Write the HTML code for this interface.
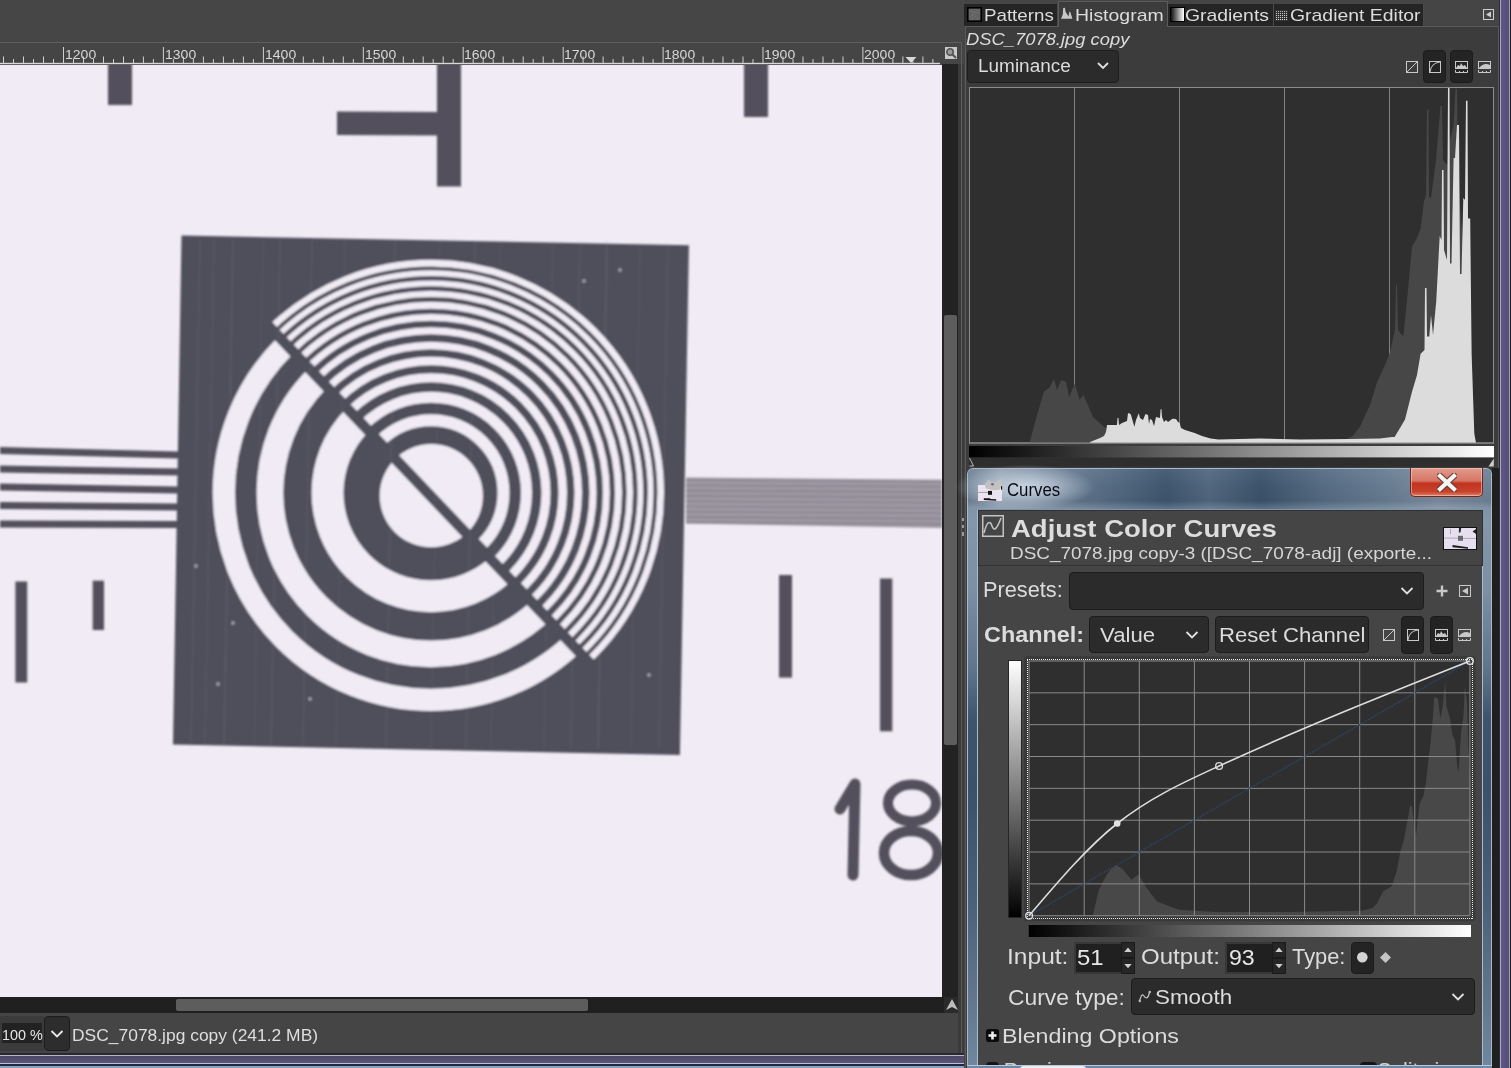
<!DOCTYPE html><html><head><meta charset="utf-8"><style>
*{box-sizing:border-box}
html,body{margin:0;padding:0}
body{width:1511px;height:1068px;overflow:hidden;position:relative;background:#454545;font-family:"Liberation Sans", sans-serif}
.abs{position:absolute;display:block}
.t{position:absolute;white-space:pre;line-height:1;transform-origin:0 0}
</style></head><body>
<div class="abs" style="left:0;top:0;width:964px;height:43px;background:#464646"></div>
<div class="abs" style="left:0;top:42px;width:962px;height:1px;background:#5e5e5e"></div>
<div class="abs" style="left:961px;top:42px;width:1px;height:1026px;background:#5e5e5e"></div>
<svg class="abs" style="left:0;top:43px" width="942" height="22" viewBox="0 43 942 22"><rect x="0" y="43" width="942" height="22" fill="#454545"/><g stroke="#d0d0d0" stroke-width="1"><line x1="-36.4" y1="47" x2="-36.4" y2="63"/><line x1="-26.4" y1="59" x2="-26.4" y2="63"/><line x1="-16.4" y1="56.5" x2="-16.4" y2="63"/><line x1="-6.5" y1="59" x2="-6.5" y2="63"/><line x1="3.5" y1="56.5" x2="3.5" y2="63"/><line x1="13.5" y1="59" x2="13.5" y2="63"/><line x1="23.5" y1="56.5" x2="23.5" y2="63"/><line x1="33.5" y1="59" x2="33.5" y2="63"/><line x1="43.5" y1="56.5" x2="43.5" y2="63"/><line x1="53.5" y1="59" x2="53.5" y2="63"/><line x1="63.5" y1="47" x2="63.5" y2="63"/><line x1="73.5" y1="59" x2="73.5" y2="63"/><line x1="83.5" y1="56.5" x2="83.5" y2="63"/><line x1="93.5" y1="59" x2="93.5" y2="63"/><line x1="103.5" y1="56.5" x2="103.5" y2="63"/><line x1="113.5" y1="59" x2="113.5" y2="63"/><line x1="123.5" y1="56.5" x2="123.5" y2="63"/><line x1="133.5" y1="59" x2="133.5" y2="63"/><line x1="143.4" y1="56.5" x2="143.4" y2="63"/><line x1="153.4" y1="59" x2="153.4" y2="63"/><line x1="163.4" y1="47" x2="163.4" y2="63"/><line x1="173.4" y1="59" x2="173.4" y2="63"/><line x1="183.4" y1="56.5" x2="183.4" y2="63"/><line x1="193.4" y1="59" x2="193.4" y2="63"/><line x1="203.4" y1="56.5" x2="203.4" y2="63"/><line x1="213.4" y1="59" x2="213.4" y2="63"/><line x1="223.4" y1="56.5" x2="223.4" y2="63"/><line x1="233.4" y1="59" x2="233.4" y2="63"/><line x1="243.4" y1="56.5" x2="243.4" y2="63"/><line x1="253.4" y1="59" x2="253.4" y2="63"/><line x1="263.4" y1="47" x2="263.4" y2="63"/><line x1="273.4" y1="59" x2="273.4" y2="63"/><line x1="283.3" y1="56.5" x2="283.3" y2="63"/><line x1="293.3" y1="59" x2="293.3" y2="63"/><line x1="303.3" y1="56.5" x2="303.3" y2="63"/><line x1="313.3" y1="59" x2="313.3" y2="63"/><line x1="323.3" y1="56.5" x2="323.3" y2="63"/><line x1="333.3" y1="59" x2="333.3" y2="63"/><line x1="343.3" y1="56.5" x2="343.3" y2="63"/><line x1="353.3" y1="59" x2="353.3" y2="63"/><line x1="363.3" y1="47" x2="363.3" y2="63"/><line x1="373.3" y1="59" x2="373.3" y2="63"/><line x1="383.3" y1="56.5" x2="383.3" y2="63"/><line x1="393.3" y1="59" x2="393.3" y2="63"/><line x1="403.3" y1="56.5" x2="403.3" y2="63"/><line x1="413.3" y1="59" x2="413.3" y2="63"/><line x1="423.2" y1="56.5" x2="423.2" y2="63"/><line x1="433.2" y1="59" x2="433.2" y2="63"/><line x1="443.2" y1="56.5" x2="443.2" y2="63"/><line x1="453.2" y1="59" x2="453.2" y2="63"/><line x1="463.2" y1="47" x2="463.2" y2="63"/><line x1="473.2" y1="59" x2="473.2" y2="63"/><line x1="483.2" y1="56.5" x2="483.2" y2="63"/><line x1="493.2" y1="59" x2="493.2" y2="63"/><line x1="503.2" y1="56.5" x2="503.2" y2="63"/><line x1="513.2" y1="59" x2="513.2" y2="63"/><line x1="523.2" y1="56.5" x2="523.2" y2="63"/><line x1="533.2" y1="59" x2="533.2" y2="63"/><line x1="543.2" y1="56.5" x2="543.2" y2="63"/><line x1="553.2" y1="59" x2="553.2" y2="63"/><line x1="563.2" y1="47" x2="563.2" y2="63"/><line x1="573.1" y1="59" x2="573.1" y2="63"/><line x1="583.1" y1="56.5" x2="583.1" y2="63"/><line x1="593.1" y1="59" x2="593.1" y2="63"/><line x1="603.1" y1="56.5" x2="603.1" y2="63"/><line x1="613.1" y1="59" x2="613.1" y2="63"/><line x1="623.1" y1="56.5" x2="623.1" y2="63"/><line x1="633.1" y1="59" x2="633.1" y2="63"/><line x1="643.1" y1="56.5" x2="643.1" y2="63"/><line x1="653.1" y1="59" x2="653.1" y2="63"/><line x1="663.1" y1="47" x2="663.1" y2="63"/><line x1="673.1" y1="59" x2="673.1" y2="63"/><line x1="683.1" y1="56.5" x2="683.1" y2="63"/><line x1="693.1" y1="59" x2="693.1" y2="63"/><line x1="703.1" y1="56.5" x2="703.1" y2="63"/><line x1="713.0" y1="59" x2="713.0" y2="63"/><line x1="723.0" y1="56.5" x2="723.0" y2="63"/><line x1="733.0" y1="59" x2="733.0" y2="63"/><line x1="743.0" y1="56.5" x2="743.0" y2="63"/><line x1="753.0" y1="59" x2="753.0" y2="63"/><line x1="763.0" y1="47" x2="763.0" y2="63"/><line x1="773.0" y1="59" x2="773.0" y2="63"/><line x1="783.0" y1="56.5" x2="783.0" y2="63"/><line x1="793.0" y1="59" x2="793.0" y2="63"/><line x1="803.0" y1="56.5" x2="803.0" y2="63"/><line x1="813.0" y1="59" x2="813.0" y2="63"/><line x1="823.0" y1="56.5" x2="823.0" y2="63"/><line x1="833.0" y1="59" x2="833.0" y2="63"/><line x1="843.0" y1="56.5" x2="843.0" y2="63"/><line x1="852.9" y1="59" x2="852.9" y2="63"/><line x1="862.9" y1="47" x2="862.9" y2="63"/><line x1="872.9" y1="59" x2="872.9" y2="63"/><line x1="882.9" y1="56.5" x2="882.9" y2="63"/><line x1="892.9" y1="59" x2="892.9" y2="63"/><line x1="902.9" y1="56.5" x2="902.9" y2="63"/><line x1="912.9" y1="59" x2="912.9" y2="63"/><line x1="922.9" y1="56.5" x2="922.9" y2="63"/><line x1="932.9" y1="59" x2="932.9" y2="63"/></g><rect x="0" y="62.8" width="940" height="1.4" fill="#d8d8d8"/><polygon points="905.5,57 916.5,57 911,63" fill="#d8d8d8"/></svg>
<span class="t" style="left:64.7px;top:47.7px;font-size:13px;color:#d8d8d8;transform:scaleX(1.0786);">1200</span>
<span class="t" style="left:164.7px;top:47.7px;font-size:13px;color:#d8d8d8;transform:scaleX(1.0786);">1300</span>
<span class="t" style="left:264.6px;top:47.7px;font-size:13px;color:#d8d8d8;transform:scaleX(1.0786);">1400</span>
<span class="t" style="left:364.5px;top:47.7px;font-size:13px;color:#d8d8d8;transform:scaleX(1.0786);">1500</span>
<span class="t" style="left:464.4px;top:47.7px;font-size:13px;color:#d8d8d8;transform:scaleX(1.0786);">1600</span>
<span class="t" style="left:564.4px;top:47.7px;font-size:13px;color:#d8d8d8;transform:scaleX(1.0786);">1700</span>
<span class="t" style="left:664.3px;top:47.7px;font-size:13px;color:#d8d8d8;transform:scaleX(1.0786);">1800</span>
<span class="t" style="left:764.2px;top:47.7px;font-size:13px;color:#d8d8d8;transform:scaleX(1.0786);">1900</span>
<span class="t" style="left:864.2px;top:47.7px;font-size:13px;color:#d8d8d8;transform:scaleX(1.0786);">2000</span>
<svg class="abs" style="left:0;top:65px" width="942" height="932" viewBox="0 65 942 932"><defs><clipPath id="cur"><polygon points="-254.8,-231.4 1124.5,1216.9 1848.6,527.3 469.4,-921.0"/></clipPath><clipPath id="cll"><polygon points="-262.5,-224.1 1116.8,1224.2 392.6,1913.8 -986.6,465.5"/></clipPath></defs><rect x="0" y="65" width="942" height="932" fill="#f0ebf4"/><filter id="soft" x="-5%" y="-5%" width="110%" height="110%"><feGaussianBlur stdDeviation="1.0"/></filter><g filter="url(#soft)"><g fill="#534f5c"><rect x="108" y="60" width="24" height="45"/><polygon points="337,111.5 440,112 440,135.5 337,135"/><rect x="437" y="60" width="24" height="126.5"/><rect x="744" y="60" width="24" height="57"/><polygon points="0,446.9 178,451.4 178,458.6 0,454.1"/><polygon points="0,465.4 178,468.4 178,475.6 0,472.6"/><polygon points="0,483.4 178,486.4 178,493.6 0,490.6"/><polygon points="0,501.9 178,503.4 178,510.6 0,509.1"/><polygon points="0,520.4 178,520.9 178,528.1 0,527.6"/><rect x="15.4" y="581.5" width="11.8" height="101"/><rect x="92.7" y="580.7" width="11.3" height="49.3"/><rect x="779" y="575" width="13" height="102.6"/><rect x="880" y="578.5" width="12.3" height="152.8"/><polygon points="181.5,235.5 688.9,245.2 679.9,755.1 173,744.6" fill="#504f5b"/><line x1="200" y1="240" x2="191" y2="748" stroke="#9a9cac" stroke-width="1.2" opacity="0.12"/><line x1="214" y1="240" x2="205" y2="748" stroke="#9a9cac" stroke-width="1.2" opacity="0.10"/><line x1="233" y1="240" x2="224" y2="748" stroke="#9a9cac" stroke-width="1.2" opacity="0.16"/><line x1="263" y1="240" x2="254" y2="748" stroke="#9a9cac" stroke-width="1.2" opacity="0.09"/><line x1="280" y1="240" x2="271" y2="748" stroke="#9a9cac" stroke-width="1.2" opacity="0.14"/><line x1="312" y1="240" x2="303" y2="748" stroke="#9a9cac" stroke-width="1.2" opacity="0.12"/><line x1="345" y1="240" x2="336" y2="748" stroke="#9a9cac" stroke-width="1.2" opacity="0.09"/><line x1="395" y1="240" x2="386" y2="748" stroke="#9a9cac" stroke-width="1.2" opacity="0.14"/><line x1="440" y1="240" x2="431" y2="748" stroke="#9a9cac" stroke-width="1.2" opacity="0.08"/><line x1="475" y1="240" x2="466" y2="748" stroke="#9a9cac" stroke-width="1.2" opacity="0.13"/><line x1="500" y1="240" x2="491" y2="748" stroke="#9a9cac" stroke-width="1.2" opacity="0.09"/><line x1="553" y1="240" x2="544" y2="748" stroke="#9a9cac" stroke-width="1.2" opacity="0.09"/><line x1="580" y1="240" x2="571" y2="748" stroke="#9a9cac" stroke-width="1.2" opacity="0.13"/><line x1="607" y1="240" x2="598" y2="748" stroke="#9a9cac" stroke-width="1.2" opacity="0.18"/><line x1="640" y1="240" x2="631" y2="748" stroke="#9a9cac" stroke-width="1.2" opacity="0.09"/><line x1="668" y1="240" x2="659" y2="748" stroke="#9a9cac" stroke-width="1.2" opacity="0.11"/><circle cx="584" cy="281" r="1.7" fill="#e6e4ee" opacity="0.6"/><circle cx="620" cy="270" r="1.7" fill="#e6e4ee" opacity="0.6"/><circle cx="218" cy="684" r="1.7" fill="#e6e4ee" opacity="0.6"/><circle cx="649" cy="675" r="1.7" fill="#e6e4ee" opacity="0.6"/><circle cx="196" cy="566" r="1.7" fill="#e6e4ee" opacity="0.6"/><circle cx="233" cy="623" r="1.7" fill="#e6e4ee" opacity="0.6"/><circle cx="310" cy="699" r="1.7" fill="#e6e4ee" opacity="0.6"/></g><polygon points="686,477.5 942,479.7 942,528 686,523.5" fill="#9d98a3"/><line x1="686" y1="480.0" x2="942" y2="481.5" stroke="#8a8590" stroke-width="1.6"/><line x1="686" y1="485.3" x2="942" y2="486.8" stroke="#8a8590" stroke-width="1.6"/><line x1="686" y1="490.6" x2="942" y2="492.1" stroke="#8a8590" stroke-width="1.6"/><line x1="686" y1="495.9" x2="942" y2="497.4" stroke="#8a8590" stroke-width="1.6"/><line x1="686" y1="501.2" x2="942" y2="502.7" stroke="#8a8590" stroke-width="1.6"/><line x1="686" y1="506.5" x2="942" y2="508.0" stroke="#8a8590" stroke-width="1.6"/><line x1="686" y1="511.8" x2="942" y2="513.3" stroke="#8a8590" stroke-width="1.6"/><line x1="686" y1="517.1" x2="942" y2="518.6" stroke="#8a8590" stroke-width="1.6"/><line x1="686" y1="522.4" x2="942" y2="523.9" stroke="#8a8590" stroke-width="1.6"/><g fill="none" stroke="#f0ebf4" clip-path="url(#cur)"><circle cx="431.3" cy="495.7" r="51.6" fill="#f0ebf4" stroke="none"/><circle cx="431" cy="492.8" r="72.5" stroke-width="12.0"/><circle cx="431" cy="492.8" r="95.5" stroke-width="11"/><circle cx="431" cy="492.8" r="115.0" stroke-width="9.0"/><circle cx="431" cy="492.8" r="131.75" stroke-width="8.5"/><circle cx="431" cy="492.8" r="147.25" stroke-width="7.5"/><circle cx="431" cy="492.8" r="162.0" stroke-width="7.0"/><circle cx="431" cy="492.8" r="175.4" stroke-width="6.800000000000011"/><circle cx="431" cy="492.8" r="187.5" stroke-width="7"/><circle cx="431" cy="492.8" r="198.85" stroke-width="6.300000000000011"/><circle cx="431" cy="492.8" r="209.39999999999998" stroke-width="5.599999999999994"/><circle cx="431" cy="492.8" r="219.65" stroke-width="5.699999999999989"/><circle cx="431" cy="492.8" r="229.7" stroke-width="6.599999999999994"/></g><g fill="none" stroke="#f0ebf4" clip-path="url(#cll)"><circle cx="431.3" cy="495.7" r="51.6" fill="#f0ebf4" stroke="none"/><circle cx="431" cy="492.8" r="103.45" stroke-width="31.900000000000006"/><circle cx="431" cy="492.8" r="161.05" stroke-width="26.700000000000017"/><circle cx="431" cy="492.8" r="207.15" stroke-width="22.30000000000001"/></g><g fill="none" stroke="#534f5c" stroke-width="11" stroke-linecap="round" stroke-linejoin="round"><path d="M840,809 L855,784 L853,875"/><ellipse cx="912" cy="803" rx="24" ry="18.5" stroke-width="10"/><ellipse cx="911" cy="853" rx="27" ry="22" stroke-width="10.5"/></g></g></svg>
<div class="abs" style="left:945px;top:47px;width:12px;height:12px;background:#c9c9c9"></div>
<svg class="abs" style="left:945px;top:47px" width="12" height="12"><circle cx="5" cy="5" r="3.2" fill="#9a9a9a" stroke="#555" stroke-width="1.6"/><line x1="7.3" y1="7.3" x2="11" y2="11" stroke="#555" stroke-width="2"/></svg>
<div class="abs" style="left:942px;top:64px;width:16px;height:933px;background:#222"></div>
<div class="abs" style="left:944px;top:315px;width:13px;height:430px;background:#5d5d5d;border-radius:2px"></div>
<div class="abs" style="left:0;top:997px;width:944px;height:16px;background:#202020"></div>
<div class="abs" style="left:176px;top:999px;width:412px;height:12px;background:#5d5d5d;border-radius:2px"></div>
<div class="abs" style="left:944px;top:997px;width:14px;height:16px;background:#2a2a2a"></div>
<svg class="abs" style="left:944px;top:997px" width="16" height="16"><polygon points="8,2 14,13 8,10 2,13" fill="#bdbdbd"/></svg>
<div class="abs" style="left:0;top:1013px;width:961px;height:41px;background:#454545"></div>
<div class="abs" style="left:0;top:1016px;width:44px;height:35px;background:#3b3b3b"></div>
<div class="abs" style="left:2px;top:1023px;width:40px;height:20px;background:#222"></div>
<span class="t" style="left:1.6px;top:1028.4px;font-size:14.5px;color:#e6e6e6;transform:scaleX(0.9900);">100 %</span>
<div class="abs" style="left:44px;top:1016px;width:26px;height:35px;background:#2d2d2d;border:1px solid #1c1c1c;border-radius:4px"></div>
<svg class="abs" style="left:44px;top:1016px" width="26" height="35"><polyline points="7.5,15 13,20.5 18.5,15" fill="none" stroke="#e8e8e8" stroke-width="1.8"/></svg>
<span class="t" style="left:72.1px;top:1027.0px;font-size:17px;color:#dedede;transform:scaleX(1.0252);">DSC_7078.jpg copy (241.2 MB)</span>
<div class="abs" style="left:0;top:1053px;width:967px;height:15px;background:linear-gradient(#2a2a2a 0,#2a2a2a 2px,#b8b4cc 2px,#b8b4cc 3px,#4e4868 3px,#5a5478 10px,#c0bcd4 10px,#c0bcd4 11px,#1c2a40 11px,#1c2a40 13px,#8aa0c0 13px)"></div>
<div class="abs" style="left:958px;top:64px;width:6px;height:989px;background:linear-gradient(90deg,#3a3a3a 0,#3a3a3a 3px,#5e5e5e 3px,#5e5e5e 4px,#3c3c3c 4px,#3c3c3c 6px,#505050 6px,#505050 7px,#333 7px)"></div>
<div class="abs" style="left:964px;top:0;width:547px;height:1068px;background:#454545"></div>
<div class="abs" style="left:964px;top:3.5px;width:460px;height:22.5px;background:#252525"></div>
<div class="abs" style="left:1056.5px;top:3.5px;width:1px;height:22.5px;background:#4a4a4a"></div>
<div class="abs" style="left:1273.4px;top:3.5px;width:1px;height:22.5px;background:#4a4a4a"></div>
<div class="abs" style="left:1423.2px;top:3.5px;width:1px;height:22.5px;background:#4a4a4a"></div>
<div class="abs" style="left:1057.5px;top:1px;width:110px;height:26px;background:#3c3c3c;border:1px solid #5c5c5c;border-bottom:none"></div>
<div class="abs" style="left:964.5px;top:26px;width:534.5px;height:1042px;background:#3c3c3c;border:1px solid #5a5a5a;border-bottom:none"></div>
<div class="abs" style="left:1058.5px;top:26px;width:108px;height:2px;background:#3c3c3c"></div>
<svg class="abs" style="left:967px;top:7px" width="15" height="15"><filter id="nz"><feTurbulence type="fractalNoise" baseFrequency="0.9" numOctaves="2" seed="3"/><feColorMatrix type="matrix" values="0 0 0 0 0.45 0 0 0 0 0.45 0 0 0 0 0.45 0 0 0 1.6 -0.3"/></filter><rect x="1.5" y="1.5" width="12" height="12" fill="#555"/><rect x="1.5" y="1.5" width="12" height="12" fill="#fff" filter="url(#nz)" opacity="0.35"/><rect x="0.75" y="0.75" width="13.5" height="13.5" fill="none" stroke="#000" stroke-width="1.5"/></svg>
<svg class="abs" style="left:1060px;top:6px" width="14" height="14"><polygon points="1,12.8 2.8,8.5 3.2,2 4.9,1.8 5.6,6 7,8 8.5,10.4 9.4,5.8 10.2,5.8 12.4,12.8" fill="#c8c8c8"/></svg>
<div class="abs" style="left:1170px;top:7px;width:15px;height:15px;background:linear-gradient(90deg,#111,#fff);border:1.5px solid #000"></div>
<div class="abs" style="left:1275px;top:9.5px;width:13px;height:11.5px;background:repeating-linear-gradient(90deg,rgba(43,43,43,0.9) 0 1px,transparent 1px 2px),repeating-linear-gradient(0deg,rgba(43,43,43,0.9) 0 1px,transparent 1px 2px),linear-gradient(#aaa,#ddd)"></div>
<span class="t" style="left:984.1px;top:6.9px;font-size:17px;color:#dcdcdc;transform:scaleX(1.1016);">Patterns</span>
<span class="t" style="left:1074.9px;top:6.9px;font-size:17px;color:#dcdcdc;transform:scaleX(1.1447);">Histogram</span>
<span class="t" style="left:1184.9px;top:6.9px;font-size:17px;color:#dcdcdc;transform:scaleX(1.1389);">Gradients</span>
<span class="t" style="left:1289.9px;top:6.9px;font-size:17px;color:#dcdcdc;transform:scaleX(1.1416);">Gradient Editor</span>
<svg class="abs" style="left:1483px;top:9px" width="11" height="11"><rect x="0.5" y="0.5" width="10" height="10" fill="none" stroke="#cfcfcf" stroke-width="1"/><polygon points="8,2.5 8,8.5 3,5.5" fill="#cfcfcf"/></svg>
<span class="t" style="left:966.4px;top:31.6px;font-size:16px;color:#dcdcdc;font-style:italic;transform:scaleX(1.1479);">DSC_7078.jpg copy</span>
<div class="abs" style="left:967.4px;top:50.4px;width:152px;height:33px;background:#2b2b2b;border:1px solid #1e1e1e;border-radius:4px"></div>
<span class="t" style="left:977.8px;top:58.4px;font-size:17.5px;color:#dcdcdc;transform:scaleX(1.0833);">Luminance</span>
<svg class="abs" style="left:1096px;top:61px" width="14" height="10"><polyline points="2,2 7,7 12,2" fill="none" stroke="#e0e0e0" stroke-width="1.8"/></svg>
<svg class="abs" style="left:964px;top:84px" width="535" height="386" viewBox="964 84 535 386"><rect x="969.5" y="87.5" width="524" height="355.5" fill="#2f2f2f" stroke="#8c8c8c" stroke-width="1"/><line x1="1074.5" y1="88" x2="1074.5" y2="443" stroke="#8c8c8c" stroke-width="1" opacity="0.9"/><line x1="1179.5" y1="88" x2="1179.5" y2="443" stroke="#8c8c8c" stroke-width="1" opacity="0.9"/><line x1="1284.5" y1="88" x2="1284.5" y2="443" stroke="#8c8c8c" stroke-width="1" opacity="0.9"/><line x1="1389.5" y1="88" x2="1389.5" y2="443" stroke="#8c8c8c" stroke-width="1" opacity="0.9"/><polygon points="1029.5,443 1033,430 1037,415 1041.4,400.5 1043.8,391.8 1049.4,387.8 1054.1,379 1057,390 1061.3,379.9 1066,382 1069.2,397.3 1074.8,383.8 1079.6,399.7 1083.5,395 1088.3,406 1093,417.2 1105.8,428.3 1110,443" fill="#474747"/><polygon points="1335,443 1345,440 1353,435.8 1360,426.5 1370,405 1377.3,381.4 1385,365 1389.5,353.7 1395,330 1396,284.4 1397,284.4 1398,330 1403.3,336.4 1408,290 1412,246.3 1416,240 1420.6,229 1424,201.3 1426,195 1427,109.5 1428.5,109.5 1429,197 1431,197.8 1436,160 1440.5,106 1442,106 1443,160 1447,165 1450,140 1453.6,125 1455.5,88.7 1457,88.7 1458,170 1461,220 1464,251.5 1467.4,218.6 1470,300 1472,360 1474,440 1476,443" fill="#474747"/><polygon points="1089.9,443 1090,442 1095,440 1100,438 1104,436 1106,432 1107,425 1117,425 1117.5,418 1118.5,418 1119,425 1122,423 1127,421 1128,413.2 1130,413.5 1131,415 1133,422 1134.4,426.7 1136,420 1138.8,413.2 1140,418 1143,420 1145.5,414 1148,415 1149,424 1150,419 1152,420 1154,426 1156,417 1160,418 1160.6,409.2 1161.5,409.2 1162,417 1164,422 1166,420 1168,422 1172.5,418.8 1176,419 1178,422 1179.6,422.7 1181,428 1185,430 1194.7,433 1202,436 1210.6,438.6 1218.5,439.4 1260,438.6 1300,439.5 1350,439 1380,438.5 1392,437 1394.6,437 1400,428 1405,419.6 1412,391.8 1417,375 1420.6,353.7 1424.5,350 1425,288 1426.5,288 1427,336.4 1429.3,336.4 1431,315 1433,335 1436.2,301.8 1439.7,236 1441.5,240 1442,170 1443.5,170 1444,250 1447,260 1448,87 1449.5,87 1450,263.6 1451.5,263.6 1453.6,158 1455,158 1457,125 1459,125 1460,274 1461.5,274 1463.3,197.8 1465,200 1466,100.8 1467.5,100.8 1468,218.6 1470.2,218.6 1471.6,353.7 1474.3,433.4 1476,443" fill="#dcdcdc"/><rect x="969.5" y="87.5" width="524" height="355.5" fill="none" stroke="#8c8c8c" stroke-width="1"/><defs><linearGradient id="gbar"><stop offset="0" stop-color="#000"/><stop offset="1" stop-color="#fff"/></linearGradient></defs><rect x="969" y="446" width="525" height="11.6" fill="url(#gbar)"/><rect x="969" y="457.6" width="525" height="9" fill="#2e2e2e"/><polyline points="969.5,458 973.5,466 969.5,466" fill="none" stroke="#bbb" stroke-width="1"/><polygon points="1493.8,458.5 1488.5,466.5 1493.8,466.5" fill="#cfcfcf"/></svg>
<div class="abs" style="left:1423px;top:50px;width:23px;height:33px;background:#242424;border:1px solid #1c1c1c;border-radius:4px"></div>
<div class="abs" style="left:1450px;top:50px;width:22.5px;height:33px;background:#242424;border:1px solid #1c1c1c;border-radius:4px"></div>
<svg class="abs" style="left:1405.8px;top:61px" width="13" height="13"><rect x="0.5" y="0.5" width="11" height="11" fill="none" stroke="#c8c8c8"/><line x1="1" y1="11" x2="11" y2="1" stroke="#c8c8c8"/></svg>
<svg class="abs" style="left:1428.5px;top:61px" width="13" height="13"><rect x="0.5" y="0.5" width="11" height="11" fill="none" stroke="#c8c8c8"/><path d="M1,11 Q2,2 11,1" fill="none" stroke="#c8c8c8"/></svg>
<svg class="abs" style="left:1455px;top:61px" width="13" height="13"><rect x="0.5" y="0.5" width="12" height="7" fill="none" stroke="#c8c8c8"/><polygon points="1,7 3,4 5,5 6,2 8,5 10,4 12,7" fill="#c8c8c8"/><polyline points="0.5,9 0.5,11.5 12.5,11.5 12.5,9" fill="none" stroke="#c8c8c8"/><line x1="4.5" y1="10" x2="4.5" y2="11.5" stroke="#c8c8c8"/><line x1="8.5" y1="10" x2="8.5" y2="11.5" stroke="#c8c8c8"/></svg>
<svg class="abs" style="left:1478px;top:61px" width="13" height="13"><rect x="0.5" y="0.5" width="12" height="7" fill="none" stroke="#c8c8c8"/><path d="M1,7 Q6,1 12,4 L12,7Z" fill="#c8c8c8"/><polyline points="0.5,9 0.5,11.5 12.5,11.5 12.5,9" fill="none" stroke="#c8c8c8"/><line x1="4.5" y1="10" x2="4.5" y2="11.5" stroke="#c8c8c8"/><line x1="8.5" y1="10" x2="8.5" y2="11.5" stroke="#c8c8c8"/></svg>
<div class="abs" style="left:1498.5px;top:0;width:12.5px;height:1068px;background:linear-gradient(90deg,#2e2e2e 0,#2e2e2e 1px,#aaa4c4 1px,#aaa4c4 2px,#5e5784 2px,#564f7a 9.5px,#a09ab8 9.5px,#a09ab8 10.5px,#1e1e1e 10.5px)"></div>
<div class="abs" style="left:962px;top:517.7px;width:2.2px;height:3.8px;background:#9a9a9a"></div>
<div class="abs" style="left:962px;top:524.7px;width:2.2px;height:3.8px;background:#9a9a9a"></div>
<div class="abs" style="left:962px;top:532.2px;width:2.2px;height:3.8px;background:#9a9a9a"></div>
<div class="abs" style="left:967.4px;top:468px;width:524.6px;height:600px;border-radius:6px 6px 0 0;border:1px solid #a9b9c9;background:linear-gradient(#6f8398 0,#8496a9 50px,#7c8fa3 120px,#5f758c 200px,#3d546c 250px,#3a5169 320px,#4a6078 430px,#62778d 530px,#7088a0 600px)"></div>
<div class="abs" style="left:968.4px;top:469px;width:522.6px;height:40px;border-radius:5px 5px 0 0;background:linear-gradient(90deg,#6e8195 0%,#8a9aab 6%,#64788e 20%,#4f667d 30%,#3f566e 38%,#52687f 46%,#3c536b 56%,#566c83 68%,#687d92 80%,#7d8d9f 90%,#6f8196 100%)"></div>
<div class="abs" style="left:968.4px;top:469px;width:522.6px;height:40px;background:linear-gradient(rgba(255,255,255,0.06),rgba(255,255,255,0) 40%,rgba(0,0,0,0.05) 80%,rgba(190,205,220,0.25) 100%)"></div>
<div class="abs" style="left:955px;top:462px;width:140px;height:50px;background:radial-gradient(ellipse 50% 45% at 50% 50%,rgba(210,220,230,0.9) 0%,rgba(200,212,225,0.6) 45%,rgba(200,212,225,0) 100%)"></div>
<svg class="abs" style="left:974px;top:474px" width="32" height="30"><rect x="4" y="11" width="24" height="16" fill="#ece3f1"/><polygon points="10.7,10.1 15.2,5.1 16.9,8.4 21.3,8.4 27.5,4.2 27.8,11.8 25.3,15.7 19.7,16.3 11.8,14.6" fill="#c2c2c2"/><ellipse cx="18.5" cy="10.3" rx="1.6" ry="1.1" fill="#666"/><rect x="4.2" y="17.9" width="9.8" height="0.9" fill="#999"/><rect x="14" y="16.9" width="4" height="3.9" fill="#151515"/><polygon points="9.8,24.2 16,24.2 16.5,25 22.2,25.2 22.2,26.7 9.8,26" fill="#111"/><rect x="27" y="12.1" width="1.1" height="3.6" fill="#111"/></svg>
<span class="t" style="left:1006.5px;top:480.8px;font-size:18.4px;color:#0a0a14;transform:scaleX(0.9123);">Curves</span>
<div class="abs" style="left:1410.3px;top:468.4px;width:72.7px;height:29px;border:1px solid #6e2a20;border-top:none;border-radius:0 0 5px 5px;background:linear-gradient(#e39a8c 0%,#d57766 45%,#c2331e 55%,#c8432c 85%,#e0806a 100%);box-shadow:inset 0 0 0 1px rgba(255,220,210,0.5)"></div>
<svg class="abs" style="left:1437px;top:472.5px" width="20" height="19"><path d="M3,3 L17,16 M17,3 L3,16" stroke="#6a3a34" stroke-width="6.4" stroke-linecap="square"/><path d="M3,3 L17,16 M17,3 L3,16" stroke="#f4f4f4" stroke-width="4.2" stroke-linecap="square"/></svg>
<div class="abs" style="left:1492px;top:468px;width:6.5px;height:600px;background:#1f1f1f"></div>
<div class="abs" style="left:976.7px;top:509.6px;width:506px;height:560px;background:#454545;border:1px solid #a8bccf"></div>
<div class="abs" style="left:977.7px;top:510.4px;width:505px;height:55.6px;background:#454545;border:1px solid #323232"></div>
<svg class="abs" style="left:982px;top:515px" width="22" height="22"><rect x="0.75" y="0.75" width="20.5" height="20.5" fill="none" stroke="#c4c4c4" stroke-width="1.5"/><path d="M2,18 C5,6 8,5 10,11 C12,17 15,14 19,3" fill="none" stroke="#c4c4c4" stroke-width="1.5"/></svg>
<span class="t" style="left:1010.5px;top:516.6px;font-size:24.5px;color:#dddddd;font-weight:bold;transform:scaleX(1.1221);">Adjust Color Curves</span>
<span class="t" style="left:1010.4px;top:545.3px;font-size:16.4px;color:#d6d6d6;transform:scaleX(1.1554);">DSC_7078.jpg copy-3 ([DSC_7078-adj] (exporte...</span>
<div class="abs" style="left:1443px;top:527px;width:34px;height:23px;background:#e6dff0;border:1px solid #111"></div>
<svg class="abs" style="left:1444px;top:528px" width="32" height="21"><line x1="0" y1="10" x2="32" y2="10.5" stroke="#b0aab8" stroke-width="1"/><rect x="14" y="7.8" width="5" height="5" fill="#6a6a72"/><polygon points="15,0 17.2,0 16.5,4.5 14.8,4.5" fill="#2a2a2a"/><polygon points="32,1 28.5,3.5 32,6" fill="#222"/><polygon points="8.5,17 24,19.3 24,20.8 8.5,19.2" fill="#1e1e1e"/><rect x="6" y="1" width="1" height="5" fill="#aaa"/></svg>
<span class="t" style="left:983.2px;top:580.4px;font-size:21.5px;color:#dcdcdc;transform:scaleX(1.0107);">Presets:</span>
<div class="abs" style="left:1069.1px;top:572.3px;width:354.8px;height:37.4px;background:#2b2b2b;border:1px solid #1c1c1c;border-radius:4px"></div>
<svg class="abs" style="left:1400px;top:585px" width="15" height="12"><polyline points="1.5,3 7,8.5 12.5,3" fill="none" stroke="#e0e0e0" stroke-width="1.8"/></svg>
<svg class="abs" style="left:1436px;top:585px" width="12" height="12"><path d="M6,0.5 V11.5 M0.5,6 H11.5" stroke="#c8c8c8" stroke-width="2.4"/></svg>
<svg class="abs" style="left:1459px;top:585px" width="12" height="12"><rect x="0.5" y="0.5" width="11" height="11" fill="none" stroke="#c8c8c8"/><polygon points="9,2.5 9,9.5 3,6" fill="#c8c8c8"/></svg>
<span class="t" style="left:983.7px;top:624.5px;font-size:21.5px;color:#dcdcdc;font-weight:bold;transform:scaleX(1.0888);">Channel:</span>
<div class="abs" style="left:1089.2px;top:616.4px;width:119.6px;height:37px;background:#2b2b2b;border:1px solid #1c1c1c;border-radius:4px"></div>
<span class="t" style="left:1100.4px;top:624.6px;font-size:20.5px;color:#dcdcdc;transform:scaleX(1.0820);">Value</span>
<svg class="abs" style="left:1185px;top:629px" width="15" height="12"><polyline points="1.5,3 7,8.5 12.5,3" fill="none" stroke="#e0e0e0" stroke-width="1.8"/></svg>
<div class="abs" style="left:1215.3px;top:616.4px;width:153.7px;height:37px;background:#2b2b2b;border:1px solid #1c1c1c;border-radius:4px"></div>
<span class="t" style="left:1218.7px;top:624.7px;font-size:20.8px;color:#dcdcdc;transform:scaleX(1.0642);">Reset Channel</span>
<div class="abs" style="left:1401px;top:615.8px;width:23px;height:38px;background:#242424;border:1px solid #1c1c1c;border-radius:4px"></div>
<div class="abs" style="left:1430px;top:615.8px;width:23px;height:38px;background:#242424;border:1px solid #1c1c1c;border-radius:4px"></div>
<svg class="abs" style="left:1383px;top:628.5px" width="13" height="13"><rect x="0.5" y="0.5" width="11" height="11" fill="none" stroke="#c8c8c8"/><line x1="1" y1="11" x2="11" y2="1" stroke="#c8c8c8"/></svg>
<svg class="abs" style="left:1406.5px;top:628.5px" width="13" height="13"><rect x="0.5" y="0.5" width="11" height="11" fill="none" stroke="#c8c8c8"/><path d="M1,11 Q2,2 11,1" fill="none" stroke="#c8c8c8"/></svg>
<svg class="abs" style="left:1435px;top:628.5px" width="13" height="13"><rect x="0.5" y="0.5" width="12" height="7" fill="none" stroke="#c8c8c8"/><polygon points="1,7 3,4 5,5 6,2 8,5 10,4 12,7" fill="#c8c8c8"/><polyline points="0.5,9 0.5,11.5 12.5,11.5 12.5,9" fill="none" stroke="#c8c8c8"/><line x1="4.5" y1="10" x2="4.5" y2="11.5" stroke="#c8c8c8"/><line x1="8.5" y1="10" x2="8.5" y2="11.5" stroke="#c8c8c8"/></svg>
<svg class="abs" style="left:1458.4px;top:628.5px" width="13" height="13"><rect x="0.5" y="0.5" width="12" height="7" fill="none" stroke="#c8c8c8"/><path d="M1,7 Q6,1 12,4 L12,7Z" fill="#c8c8c8"/><polyline points="0.5,9 0.5,11.5 12.5,11.5 12.5,9" fill="none" stroke="#c8c8c8"/><line x1="4.5" y1="10" x2="4.5" y2="11.5" stroke="#c8c8c8"/><line x1="8.5" y1="10" x2="8.5" y2="11.5" stroke="#c8c8c8"/></svg>
<svg class="abs" style="left:1000px;top:650px" width="480" height="292" viewBox="1000 650 480 292"><defs><linearGradient id="vbar" x1="0" y1="0" x2="0" y2="1"><stop offset="0" stop-color="#fff"/><stop offset="1" stop-color="#000"/></linearGradient><linearGradient id="hbar"><stop offset="0" stop-color="#000"/><stop offset="1" stop-color="#fff"/></linearGradient></defs><rect x="1008.5" y="660.5" width="13" height="257" fill="url(#vbar)" stroke="#262626" stroke-width="1"/><rect x="1024" y="656.2" width="451.5" height="265" rx="3" fill="#393939"/><rect x="1029.1" y="661.0" width="440.8000000000002" height="254.70000000000005" fill="#2f2f2f"/><polygon points="1093.1,916 1093.1,914.4 1098.6,890.7 1105.9,876.1 1111.3,868.8 1116.8,865.2 1122.3,868.8 1131.4,879.8 1138.7,874.3 1146,887 1157,901.6 1178.8,909.7 1215.3,911.9 1288.2,911.9 1361.2,910.8 1372.2,908.3 1377,903.4 1383.1,891.3 1391.6,886.4 1396.5,871.8 1400.2,852.3 1403.8,840 1407.5,820.7 1410,806 1412,806.5 1413.6,820.7 1416,835.3 1419.6,803.6 1423.3,796.3 1425.7,784.1 1428.2,762.2 1430.6,741.5 1433,716 1434.2,696.5 1438,699 1440.3,718.4 1442.8,706.3 1445.2,680.7 1446.4,706.3 1450,718.4 1452.5,735.5 1455,740.3 1457.4,767.1 1458.6,772 1461,733 1463.5,716 1464.7,686.8 1467.1,701.4 1468.3,745.2 1470.8,789 1470.8,916" fill="#484848"/><g stroke="#8a8a8a" stroke-width="1" fill="none"><line x1="1029.10" y1="661.0" x2="1029.10" y2="915.7"/><line x1="1029.1" y1="661.00" x2="1469.9" y2="661.00"/><line x1="1084.20" y1="661.0" x2="1084.20" y2="915.7"/><line x1="1029.1" y1="692.84" x2="1469.9" y2="692.84"/><line x1="1139.30" y1="661.0" x2="1139.30" y2="915.7"/><line x1="1029.1" y1="724.67" x2="1469.9" y2="724.67"/><line x1="1194.40" y1="661.0" x2="1194.40" y2="915.7"/><line x1="1029.1" y1="756.51" x2="1469.9" y2="756.51"/><line x1="1249.50" y1="661.0" x2="1249.50" y2="915.7"/><line x1="1029.1" y1="788.35" x2="1469.9" y2="788.35"/><line x1="1304.60" y1="661.0" x2="1304.60" y2="915.7"/><line x1="1029.1" y1="820.19" x2="1469.9" y2="820.19"/><line x1="1359.70" y1="661.0" x2="1359.70" y2="915.7"/><line x1="1029.1" y1="852.03" x2="1469.9" y2="852.03"/><line x1="1414.80" y1="661.0" x2="1414.80" y2="915.7"/><line x1="1029.1" y1="883.86" x2="1469.9" y2="883.86"/><line x1="1469.90" y1="661.0" x2="1469.90" y2="915.7"/><line x1="1029.1" y1="915.70" x2="1469.9" y2="915.70"/></g><line x1="1029.1" y1="915.7" x2="1469.9" y2="661.0" stroke="#2c466a" stroke-width="1.5" stroke-dasharray="1.5 1.2"/><path d="M1029.1,915.7 C1058.47,881.17 1087.83,846.64 1117.20,823.50 C1151.17,796.74 1185.13,781.65 1219.10,766.00 C1302.70,727.48 1386.30,694.24 1469.90,661.00" fill="none" stroke="#dedede" stroke-width="1.6"/><circle cx="1117.2" cy="823.5" r="3.3" fill="#e0e0e0"/><circle cx="1029.1" cy="915.7" r="3.4" fill="none" stroke="#e0e0e0" stroke-width="1.3"/><circle cx="1219.1" cy="766" r="3.4" fill="none" stroke="#e0e0e0" stroke-width="1.3"/><circle cx="1469.9" cy="661.0" r="3.4" fill="none" stroke="#e0e0e0" stroke-width="1.3"/><rect x="1028.8" y="925" width="442.2" height="12" fill="url(#hbar)"/></svg>
<div class="abs" style="left:1027px;top:659px;width:446px;height:1px;background:repeating-linear-gradient(90deg,#ececec 0 1px,transparent 1px 2px)"></div>
<div class="abs" style="left:1027px;top:918px;width:446px;height:1px;background:repeating-linear-gradient(90deg,#ececec 0 1px,transparent 1px 2px)"></div>
<div class="abs" style="left:1027px;top:659px;width:1px;height:260px;background:repeating-linear-gradient(0deg,#ececec 0 1px,transparent 1px 2px)"></div>
<div class="abs" style="left:1472px;top:659px;width:1px;height:260px;background:repeating-linear-gradient(0deg,#ececec 0 1px,transparent 1px 2px)"></div>
<span class="t" style="left:1007.0px;top:947.4px;font-size:21.5px;color:#dcdcdc;transform:scaleX(1.1420);">Input:</span>
<div class="abs" style="left:1074.4px;top:942.2px;width:60.399999999999864px;height:31.5px;background:#383838"></div>
<div class="abs" style="left:1076.3000000000002px;top:944.0px;width:44.899999999999956px;height:27.9px;background:#202020"></div>
<div class="abs" style="left:1121.2px;top:942.2px;width:13.599999999999909px;height:31.5px;background:#262626;border:1px solid #1a1a1a"></div>
<div class="abs" style="left:1121.2px;top:957.45px;width:13.599999999999909px;height:1.5px;background:#1a1a1a"></div>
<svg class="abs" style="left:1123.0px;top:942.2px" width="10" height="31.5"><polygon points="1.3,10 5,5.5 8.7,10" fill="#d0d0d0"/><polygon points="1.3,22 5,26.2 8.7,22" fill="#d0d0d0"/></svg>
<span class="t" style="left:1077.0px;top:947.3px;font-size:21.8px;color:#e8e8e8;transform:scaleX(1.0955);">51</span>
<span class="t" style="left:1140.5px;top:947.2px;font-size:21.5px;color:#dcdcdc;transform:scaleX(1.1176);">Output:</span>
<div class="abs" style="left:1225px;top:942.2px;width:60.799999999999955px;height:31.5px;background:#383838"></div>
<div class="abs" style="left:1226.9px;top:944.0px;width:45.50000000000009px;height:27.9px;background:#202020"></div>
<div class="abs" style="left:1272.4px;top:942.2px;width:13.399999999999864px;height:31.5px;background:#262626;border:1px solid #1a1a1a"></div>
<div class="abs" style="left:1272.4px;top:957.45px;width:13.399999999999864px;height:1.5px;background:#1a1a1a"></div>
<svg class="abs" style="left:1274.1px;top:942.2px" width="10" height="31.5"><polygon points="1.3,10 5,5.5 8.7,10" fill="#d0d0d0"/><polygon points="1.3,22 5,26.2 8.7,22" fill="#d0d0d0"/></svg>
<span class="t" style="left:1228.6px;top:947.3px;font-size:21.8px;color:#e8e8e8;transform:scaleX(1.0591);">93</span>
<span class="t" style="left:1291.7px;top:947.2px;font-size:21.5px;color:#dcdcdc;transform:scaleX(1.0157);">Type:</span>
<div class="abs" style="left:1351.2px;top:942px;width:22.8px;height:31.8px;background:#242424;border:1px solid #1c1c1c;border-radius:4px"></div>
<svg class="abs" style="left:1352px;top:947px" width="42" height="21"><circle cx="10.3" cy="10.3" r="5.3" fill="#d4d4d4"/><polygon points="33.5,5 39,10.5 33.5,16 28,10.5" fill="#c4c4c4"/></svg>
<span class="t" style="left:1007.9px;top:986.5px;font-size:21.2px;color:#dcdcdc;transform:scaleX(1.0792);">Curve type:</span>
<div class="abs" style="left:1131.3px;top:978.2px;width:344.2px;height:37.1px;background:#2b2b2b;border:1px solid #1c1c1c;border-radius:4px"></div>
<svg class="abs" style="left:1138px;top:990px" width="14" height="13"><path d="M1.5,11 C3,6 4,3 6,6 C8,9 10,9 11.5,2" fill="none" stroke="#c0c0c0" stroke-width="1.3"/><circle cx="1.8" cy="11" r="1.2" fill="#c0c0c0"/><circle cx="11.8" cy="2" r="1.2" fill="#c0c0c0"/></svg>
<span class="t" style="left:1154.9px;top:986.1px;font-size:21px;color:#dcdcdc;transform:scaleX(1.0657);">Smooth</span>
<svg class="abs" style="left:1451px;top:991px" width="15" height="12"><polyline points="1.5,3 7,8.5 12.5,3" fill="none" stroke="#e0e0e0" stroke-width="1.8"/></svg>
<svg class="abs" style="left:986px;top:1029px" width="13" height="13"><rect x="0" y="0" width="13" height="13" rx="2.5" fill="#0c0c0c"/><path d="M6.5,2.5 V10.5 M2.5,6.5 H10.5" stroke="#f0f0f0" stroke-width="2.6"/></svg>
<span class="t" style="left:1001.5px;top:1025.5px;font-size:20.6px;color:#dcdcdc;transform:scaleX(1.1279);">Blending Options</span>
<div class="abs" style="left:986px;top:1062px;width:13px;height:10px;background:#151515;border-radius:4px"></div>
<div class="abs" style="left:1359.6px;top:1062px;width:17px;height:10px;background:#151515;border-radius:4px"></div>
<span class="t" style="left:1003.8px;top:1058.7px;font-size:21px;color:#d0d0d0;">Preview</span>
<span class="t" style="left:1377.4px;top:1059.4px;font-size:21px;color:#d0d0d0;">Split view</span>
<div class="abs" style="left:967px;top:1065px;width:525px;height:3px;background:#6c86a6"></div>
<div class="abs" style="left:967px;top:1064.6px;width:525px;height:1px;background:#b8c8d8"></div>
<div class="abs" style="left:1020px;top:1065.5px;width:66px;height:3px;background:#e8eef4;border-radius:3px 3px 0 0"></div>
</body></html>
